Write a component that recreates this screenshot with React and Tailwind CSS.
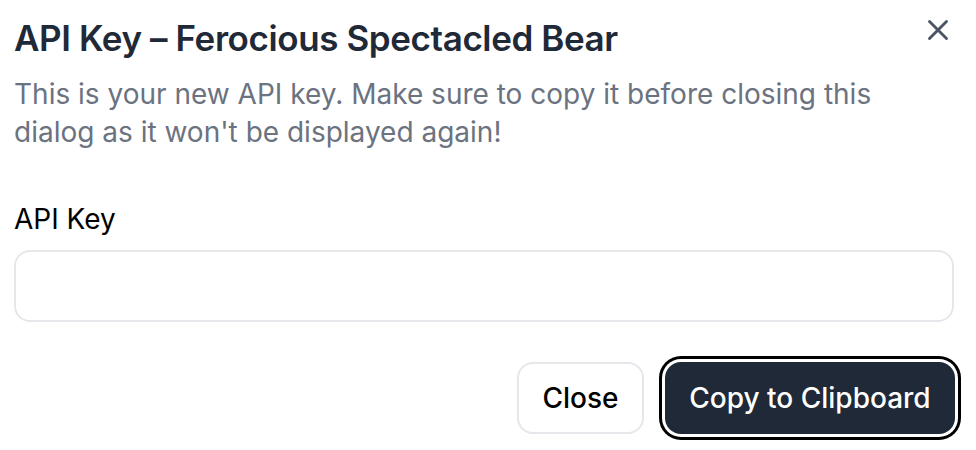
import { X } from 'lucide-react';

export default function App() {
    return (
        <div className="relative w-[976px] h-[450px] bg-white px-[14px] pt-[16px]" style={{ fontFamily: 'Inter, "Noto Sans", sans-serif' }}>
            {/* Close icon */}
            <button className="absolute top-[13px] right-[21px] text-[#4b5563]">
                <X size={34} strokeWidth={2} />
            </button>

            {/* Header */}
            <h2 className="text-[35px] leading-[44px] font-semibold text-[#1f2937] tracking-[-0.4px]">
                API Key – Ferocious Spectacled Bear
            </h2>
            <p className="mt-[15px] max-w-[900px] text-[28px] leading-[38px] text-[#6b7280]">
                This is your new API key. Make sure to copy it before closing this dialog as it won't be displayed again!
            </p>

            {/* Field */}
            <div className="mt-[51px] flex flex-col gap-[14px]">
                <label className="text-[28px] leading-[34px] font-normal text-black">API Key</label>
                <input
                    readOnly
                    className="h-[72px] w-[940px] rounded-[16px] border-2 border-[#e5e7eb] bg-white px-4 text-[28px] outline-none"
                />
            </div>

            {/* Actions */}
            <div className="mt-[40px] flex justify-end items-center gap-[21px] pr-[7px]">
                <button className="h-[72px] w-[127px] rounded-[16px] border-2 border-[#e5e7eb] bg-white text-[28px] font-medium text-black">
                    Close
                </button>
                <button className="h-[72px] w-[290px] rounded-[16px] bg-[#1f2937] text-[28px] font-medium text-white ring-[3px] ring-black ring-offset-[3px] ring-offset-white">
                    Copy to Clipboard
                </button>
            </div>
        </div>
    );
}
